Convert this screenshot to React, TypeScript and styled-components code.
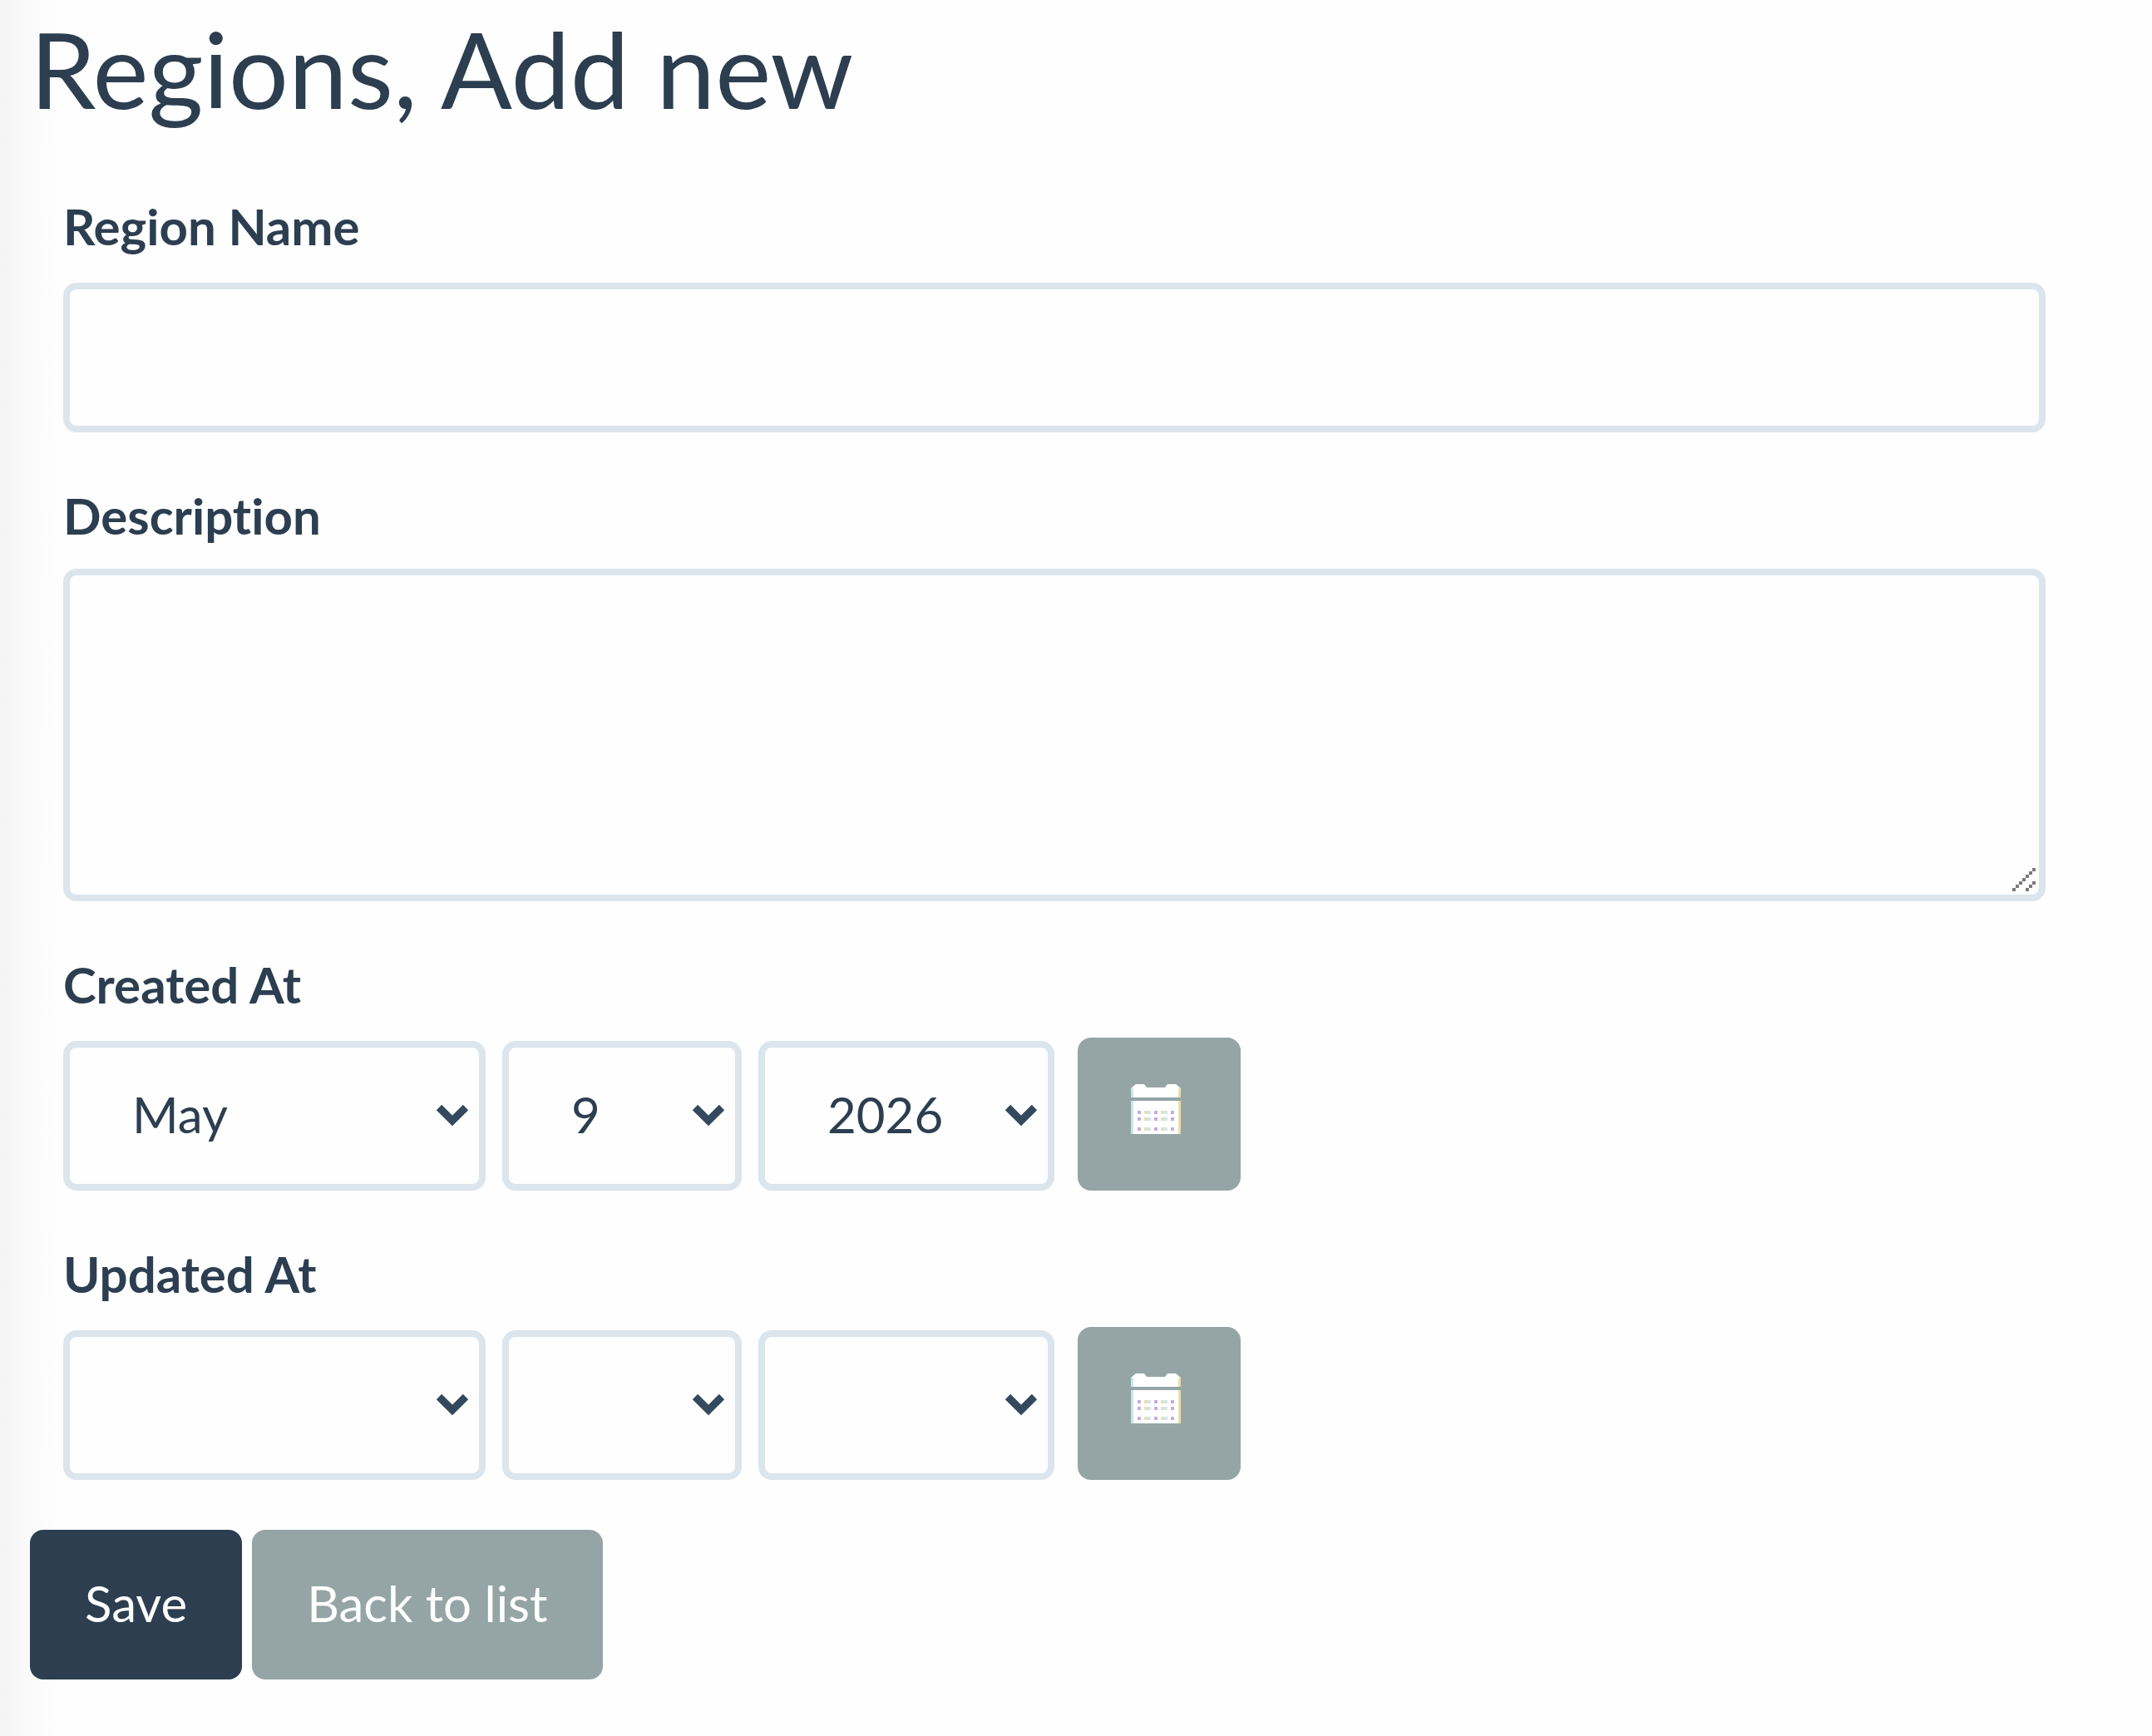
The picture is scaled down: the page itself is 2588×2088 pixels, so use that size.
import React from "react";
import styled, { createGlobalStyle } from "styled-components";

const colors = {
  text: "#2c3e50",
  border: "#dce4ec",
  primary: "#2c3e50",
  muted: "#95a5a6",
  page: "#fefefe",
};

const GlobalStyle = createGlobalStyle`
  *, *::before, *::after { box-sizing: border-box; }
  body {
    margin: 0;
    background: ${colors.page};
    color: ${colors.text};
    font-family: Lato, "Open Sans", sans-serif;
    font-size: 60px;
    line-height: 72px;
    font-variant-ligatures: none;
  }
`;

const Page = styled.main`
  min-height: 100vh;
  padding: 4px 88px 68px 36px;
  background: linear-gradient(to right, #f3f3f3 0, #f9f9f9 28px, #fcfcfc 52px, ${colors.page} 72px);
`;

const Title = styled.h1`
  margin: 0 0 76px;
  font-size: 127px;
  line-height: 156px;
  font-weight: 400;
`;

const Fields = styled.div`
  display: flex;
  flex-direction: column;
  gap: 64px;
  padding: 0 40px;
`;

const Field = styled.div`
  display: flex;
  flex-direction: column;
  align-items: stretch;
  min-width: 0;
`;

const DateGroup = styled.fieldset`
  min-width: 0;
  margin: 0;
  padding: 0;
  border: 0;
`;

const Label = styled.label`
  display: block;
  margin-bottom: 28px;
  font-weight: 700;
`;

const Legend = styled.legend`
  display: block;
  margin-bottom: 28px;
  padding: 0;
  font-weight: 700;
`;

const TextInput = styled.input`
  width: 100%;
  height: 180px;
  margin: 4px 0 0;
  padding: 40px 60px;
  border: 8px solid ${colors.border};
  border-radius: 16px;
  background: ${colors.page};
  color: inherit;
  font: inherit;
  outline: none;
`;

const AreaWrap = styled.div`
  position: relative;
  display: flex;
`;

const TextArea = styled.textarea`
  width: 100%;
  height: 400px;
  margin: 0;
  padding: 40px 60px;
  border: 8px solid ${colors.border};
  border-radius: 16px;
  background: ${colors.page};
  color: inherit;
  font: inherit;
  outline: none;
  resize: none;
`;

const Grip = styled.svg`
  position: absolute;
  right: 12px;
  bottom: 12px;
  pointer-events: none;
`;

const DateRow = styled.div`
  display: flex;
  align-items: flex-end;
  gap: 20px;
`;

const SelectWrap = styled.div<{ $width: number }>`
  position: relative;
  display: flex;
  width: ${(p) => p.$width}px;
`;

const Select = styled.select`
  appearance: none;
  width: 100%;
  height: 180px;
  margin: 0;
  padding: 0 64px 4px 75px;
  border: 8px solid ${colors.border};
  border-radius: 16px;
  background: ${colors.page};
  color: inherit;
  font: inherit;
  outline: none;
`;

const Chevron = styled.svg`
  position: absolute;
  right: 20px;
  top: 75px;
  pointer-events: none;
`;

const Button = styled.button<{ $tone: "primary" | "muted" }>`
  height: 180px;
  padding: 0 66px 4px;
  border: 0;
  border-radius: 16px;
  background: ${(p) => colors[p.$tone]};
  color: #fff;
  font: inherit;
  cursor: pointer;
`;

const CalendarButton = styled.button`
  display: flex;
  justify-content: center;
  width: 196px;
  height: 184px;
  margin-left: 8px;
  padding: 56px 0 0;
  border: 0;
  border-radius: 16px;
  background: ${colors.muted};
  color: #fff;
  cursor: pointer;
`;

const CalendarIcon = styled.svg`
  display: block;
  margin-right: 8px;
`;

const Actions = styled.div`
  display: flex;
  gap: 12px;
  margin-top: 60px;
`;

const BackLink = styled.a`
  display: flex;
  align-items: center;
  height: 180px;
  padding: 0 66px 4px;
  border-radius: 16px;
  background: ${colors.muted};
  color: #fff;
  text-decoration: none;
`;

function ResizeGrip() {
  const long = [0, 1, 2, 3, 4, 5, 6];
  const short = [0, 1, 2];
  return (
    <Grip width="28" height="28" viewBox="0 0 28 28" fill="#7a7a7a" aria-hidden="true">
      {long.map((i) => (
        <rect key={`l${i}`} x={i * 4} y={24 - i * 4} width="4" height="4" />
      ))}
      {short.map((i) => (
        <rect key={`s${i}`} x={16 + i * 4} y={24 - i * 4} width="4" height="4" />
      ))}
    </Grip>
  );
}

function Calendar() {
  return (
    <CalendarIcon width="60" height="60" viewBox="0 0 60 60" aria-hidden="true">
      <path d="M0 16V5L6 0H16L19 4H41L44 0H54L60 5V16Z" fill="#fff" />
      <rect y="20" width="60" height="40" fill="#fff" />
      <path d="M0 5H3V16H0ZM0 20H3V60H0Z" fill="#c4e6f2" />
      <path d="M57 5H60V16H57ZM57 20H60V60H57Z" fill="#ecdcae" />
      {[32, 40, 52].map((y) =>
        [8, 28, 48].map((x) => (
          <rect key={`${x}-${y}`} x={x} y={y} width="4" height="4" fill="#c3aedb" />
        ))
      )}
      {[32, 40, 52].map((y) =>
        [16, 36].map((x) => (
          <g key={`${x}-${y}`}>
            <rect x={x} y={y} width="4" height="4" fill="#e9dfb4" />
            <rect x={x + 4} y={y} width="4" height="4" fill="#cfe6ee" />
          </g>
        ))
      )}
    </CalendarIcon>
  );
}

const months = [
  "January", "February", "March", "April", "May", "June",
  "July", "August", "September", "October", "November", "December",
];
const days = Array.from({ length: 31 }, (_, i) => String(i + 1));
const years = Array.from({ length: 21 }, (_, i) => String(2016 + i));

type PartProps = { label: string; width: number; options: string[]; value: string };

function DatePart({ label, width, options, value }: PartProps) {
  return (
    <SelectWrap $width={width}>
      <Select aria-label={label} defaultValue={value}>
        <option value=""></option>
        {options.map((o) => (
          <option key={o} value={o}>
            {o}
          </option>
        ))}
      </Select>
      <Chevron width="40" height="28" viewBox="0 0 40 28" aria-hidden="true">
        <path d="M4 5L20 21L36 5" fill="none" stroke="#34495e" strokeWidth="9" />
      </Chevron>
    </SelectWrap>
  );
}

type DateFieldProps = { legend: string; month?: string; day?: string; year?: string };

function DateField({ legend, month = "", day = "", year = "" }: DateFieldProps) {
  return (
    <DateGroup>
      <Legend>{legend}</Legend>
      <DateRow>
        <DatePart label={`${legend} month`} width={508} options={months} value={month} />
        <DatePart label={`${legend} day`} width={288} options={days} value={day} />
        <DatePart label={`${legend} year`} width={356} options={years} value={year} />
        <CalendarButton type="button" aria-label={`${legend} calendar`}>
          <Calendar />
        </CalendarButton>
      </DateRow>
    </DateGroup>
  );
}

export default function App() {
  return (
    <>
      <GlobalStyle />
      <Page>
        <Title>Regions, Add new</Title>
        <form onSubmit={(e) => e.preventDefault()}>
          <Fields>
            <Field>
              <Label htmlFor="region-name">Region Name</Label>
              <TextInput id="region-name" type="text" />
            </Field>
            <Field>
              <Label htmlFor="description">Description</Label>
              <AreaWrap>
                <TextArea id="description" />
                <ResizeGrip />
              </AreaWrap>
            </Field>
            <DateField legend="Created At" month="May" day="9" year="2026" />
            <DateField legend="Updated At" />
          </Fields>
          <Actions>
            <Button type="submit" $tone="primary">
              Save
            </Button>
            <BackLink href="#list">Back to list</BackLink>
          </Actions>
        </form>
      </Page>
    </>
  );
}
